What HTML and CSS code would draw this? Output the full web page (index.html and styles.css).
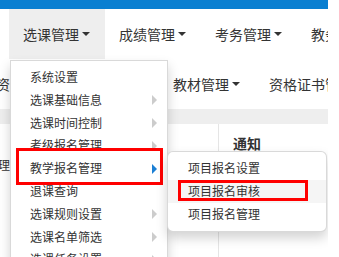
FILE: index.html
```html
<!DOCTYPE html>
<html lang="zh-CN">

<head>
    <meta charset="UTF-8">
    <meta name="viewport" content="width=device-width, initial-scale=1.0">
    <title>选课管理</title>
    <link rel="stylesheet" href="styles.css">
</head>

<body>
    <div class="page">
        <div class="topbar"></div>

        <!-- First menu row -->
        <nav class="nav">
            <div class="nav-item active">
                <span>选课管理</span><b class="caret"></b>

                <!-- Open dropdown -->
                <ul class="dropdown">
                    <li>系统设置</li>
                    <li class="has-sub">选课基础信息</li>
                    <li class="has-sub">选课时间控制</li>
                    <li class="has-sub">考级报名管理</li>
                    <li class="has-sub open">
                        教学报名管理
                        <span class="mark mark-main"></span>
                        <ul class="submenu">
                            <li>项目报名设置</li>
                            <li class="hover">项目报名审核<span class="mark mark-sub"></span></li>
                            <li>项目报名管理</li>
                        </ul>
                    </li>
                    <li>退课查询</li>
                    <li class="has-sub">选课规则设置</li>
                    <li class="has-sub">选课名单筛选</li>
                    <li class="has-sub">选课任务设置</li>
                </ul>
            </div>
            <div class="nav-item"><span>成绩管理</span><b class="caret"></b></div>
            <div class="nav-item"><span>考务管理</span><b class="caret"></b></div>
            <div class="nav-item"><span>教务管理</span><b class="caret"></b></div>
        </nav>

        <!-- Second menu row -->
        <nav class="nav nav-second">
            <div class="nav-item short"><span>资格审查</span><b class="caret"></b></div>
            <div class="nav-item"><span>实践管理</span><b class="caret"></b></div>
            <div class="nav-item"><span>教材管理</span><b class="caret"></b></div>
            <div class="nav-item"><span>资格证书管理</span><b class="caret"></b></div>
        </nav>

        <div class="band"></div>

        <div class="content">
            <div class="side">
                <p class="side-title">课程管理</p>
            </div>
            <div class="main">
                <h3 class="main-title">通知</h3>
            </div>
        </div>
    </div>
</body>

</html>
```

FILE: styles.css
```css
body {
    margin: 0;
    font-family: "Noto Sans CJK SC", "Liberation Sans", sans-serif;
    color: #333;
    background: #fff;
}

.page {
    width: 328px;
    height: 257px;
    position: relative;
    overflow: hidden;
}

.topbar {
    height: 9px;
    background: #0a7fd1;
}

/* Menu rows */
.nav {
    display: flex;
    height: 50px;
    padding-left: 9px;
    font-size: 14px;
    white-space: nowrap;
}

.nav-item {
    flex: 0 0 96px;
    box-sizing: border-box;
    padding-left: 14px;
    display: flex;
    align-items: center;
    position: relative;
}

.nav-item.active {
    background: #eee;
}

.nav-second {
    padding-left: 0;
    margin-left: -18px;
}

.nav-item.short {
    flex-basis: 80px;
}

.caret {
    width: 0;
    height: 0;
    margin-left: 3px;
    border-top: 4px solid #333;
    border-left: 4px solid transparent;
    border-right: 4px solid transparent;
}

.band {
    height: 15px;
    background: #eee;
}

.content {
    display: flex;
    height: 133px;
}

.side {
    width: 219px;
    box-sizing: border-box;
    border-right: 1px solid #e5e5e5;
}

.side-title {
    margin: 32px 0 0;
    font-size: 12px;
    line-height: 17px;
    text-indent: -38px;
}

.main {
    padding-left: 14px;
}

.main-title {
    margin: 9px 0 0;
    font-size: 14px;
    line-height: 20px;
    font-weight: bold;
}

/* Dropdown menu */
.dropdown,
.submenu {
    position: absolute;
    margin: 0;
    padding: 5px 0;
    list-style: none;
    background: #fff;
    border: 1px solid rgba(0, 0, 0, 0.15);
    box-shadow: 0 6px 12px rgba(0, 0, 0, 0.175);
    font-size: 12px;
    box-sizing: border-box;
    z-index: 10;
}

.dropdown {
    top: 100%;
    left: 1px;
    margin-top: 1px;
    width: 158px;
    border-radius: 0 0 4px 4px;
}

.dropdown li {
    position: relative;
    padding: 3px 19px;
    line-height: 16.8px;
}

.has-sub::after {
    content: "";
    position: absolute;
    right: 10px;
    top: 50%;
    margin-top: -5px;
    border-left: 5px solid #ccc;
    border-top: 5px solid transparent;
    border-bottom: 5px solid transparent;
}

.has-sub.open::after {
    border-left-color: #1b7fd4;
}

.submenu {
    left: 100%;
    top: -6px;
    width: 160px;
    border-radius: 6px;
}

.submenu li {
    padding: 3px 20px;
}

.submenu li.hover {
    background: #f5f5f5;
}

/* Red highlight boxes */
.mark {
    position: absolute;
    border: 3px solid #f00;
    pointer-events: none;
}

.mark-main {
    top: -9px;
    bottom: -5px;
    left: 5px;
    right: 4px;
}

.mark-sub {
    top: 0;
    bottom: 2px;
    left: 10px;
    right: 18px;
}
```
